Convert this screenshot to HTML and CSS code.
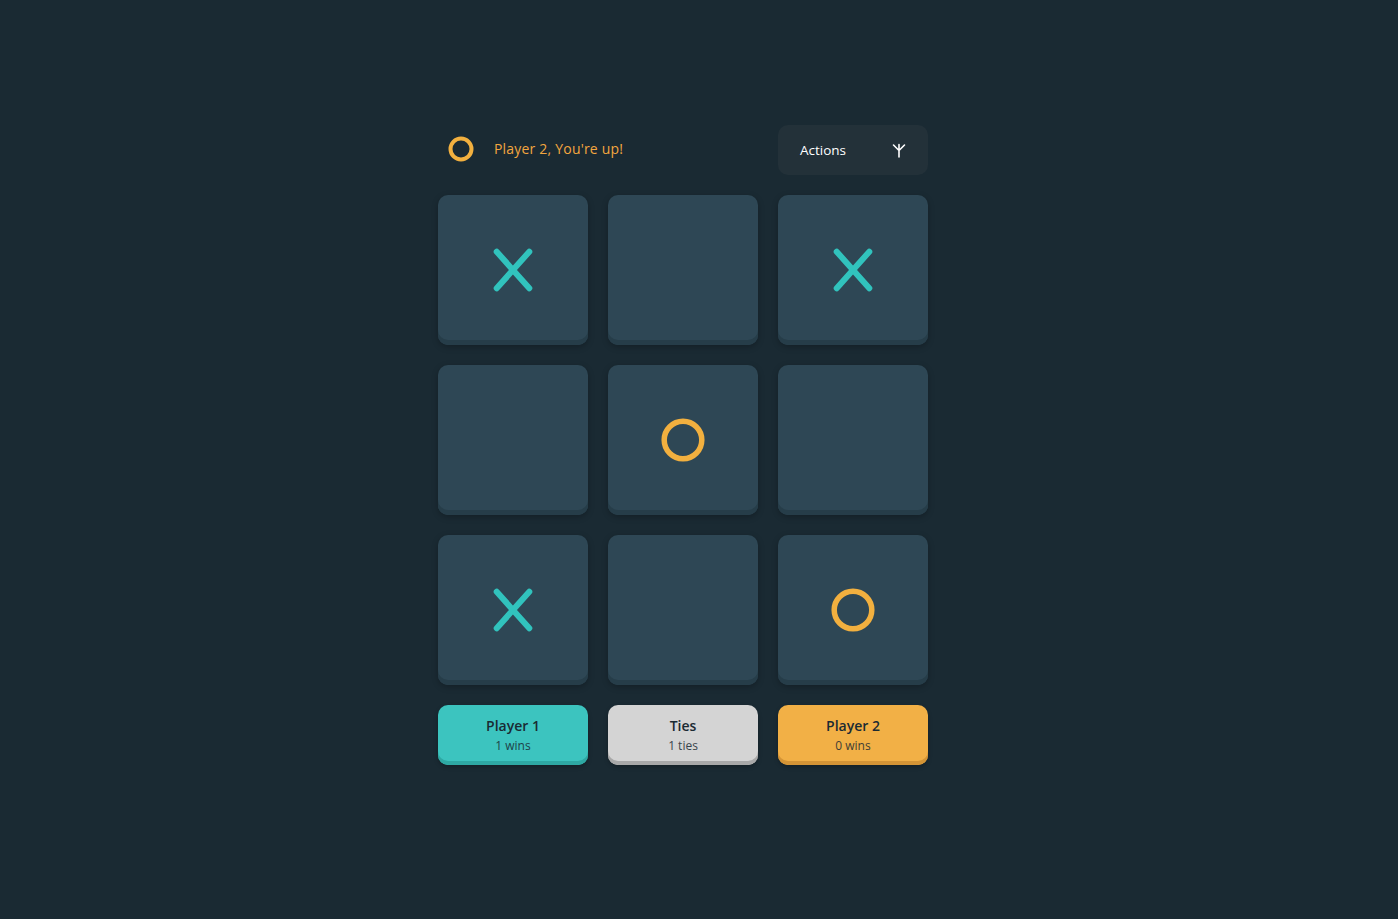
FILE: index.html
```html
<!DOCTYPE html>
<html lang="en">
<head>
<meta charset="utf-8">
<title>Tic Tac Toe</title>
<link rel="stylesheet" href="styles.css">
</head>
<body>
<main class="game">
  <header class="top">
    <div class="turn">
      <svg class="turn-icon" width="26" height="26" viewBox="0 0 26 26"><circle cx="13" cy="13" r="10.5" fill="none" stroke="#f2b03f" stroke-width="4"/></svg>
      <span class="turn-text">Player 2, You're up!</span>
    </div>
    <button class="actions">
      <span>Actions</span>
      <svg width="14" height="16" viewBox="0 0 14 16"><path d="M7 2.5V15M1.5 3L7 8.5L12.5 3" fill="none" stroke="#ffffff" stroke-width="1.6" stroke-linecap="round" stroke-linejoin="round"/></svg>
    </button>
  </header>
  <section class="board">
    <div class="cell"><svg class="mark" width="44" height="48" viewBox="0 0 44 48"><path d="M5.7 5.7L38.3 42.3M38.3 5.7L5.7 42.3" stroke="#31c3bd" stroke-width="6" stroke-linecap="round"/></svg></div>
    <div class="cell"></div>
    <div class="cell"><svg class="mark" width="44" height="48" viewBox="0 0 44 48"><path d="M5.7 5.7L38.3 42.3M38.3 5.7L5.7 42.3" stroke="#31c3bd" stroke-width="6" stroke-linecap="round"/></svg></div>
    <div class="cell"></div>
    <div class="cell"><svg class="mark" width="44" height="44" viewBox="0 0 44 44"><circle cx="22" cy="22" r="18.8" fill="none" stroke="#f2b03f" stroke-width="5.5"/></svg></div>
    <div class="cell"></div>
    <div class="cell"><svg class="mark" width="44" height="48" viewBox="0 0 44 48"><path d="M5.7 5.7L38.3 42.3M38.3 5.7L5.7 42.3" stroke="#31c3bd" stroke-width="6" stroke-linecap="round"/></svg></div>
    <div class="cell"></div>
    <div class="cell"><svg class="mark" width="44" height="44" viewBox="0 0 44 44"><circle cx="22" cy="22" r="18.8" fill="none" stroke="#f2b03f" stroke-width="5.5"/></svg></div>
  </section>
  <footer class="scores">
    <div class="score score-p1"><div class="score-title">Player 1</div><div class="score-sub">1 wins</div></div>
    <div class="score score-ties"><div class="score-title">Ties</div><div class="score-sub">1 ties</div></div>
    <div class="score score-p2"><div class="score-title">Player 2</div><div class="score-sub">0 wins</div></div>
  </footer>
</main>
</body>
</html>
```
FILE: styles.css
```css
* { box-sizing: border-box; }
html, body { margin: 0; padding: 0; }
body {
  background: #1a2a33;
  font-family: "Open Sans", "Noto Sans", sans-serif;
  min-height: 919px;
  padding-right: 32px;
}
.game {
  width: 490px;
  margin: 125px auto 0;
  display: flex;
  flex-direction: column;
  gap: 20px;
}
.top {
  display: flex;
  justify-content: space-between;
  align-items: center;
  height: 50px;
}
.turn {
  display: flex;
  align-items: center;
  gap: 20px;
  padding-left: 10px;
  margin-top: -3px;
}
.turn-icon { display: block; }
.turn-text {
  color: #f2a63f;
  font-size: 14px;
  letter-spacing: 0.2px;
}
.actions {
  width: 150px;
  height: 50px;
  border: 0;
  border-radius: 10px;
  background: #233139;
  color: #ffffff;
  font-family: inherit;
  font-size: 13.5px;
  display: flex;
  align-items: center;
  justify-content: space-between;
  padding: 0 22px 0 22px;
}
.actions svg { display: block; }
.board {
  display: grid;
  grid-template-columns: repeat(3, 150px);
  grid-auto-rows: 150px;
  gap: 20px;
}
.cell {
  background: #2e4755;
  border-radius: 10px;
  box-shadow: inset 0 -5px 0 #263d49, 0 2px 6px rgba(0, 0, 0, 0.25);
  display: flex;
  align-items: center;
  justify-content: center;
}
.mark { display: block; }
.scores {
  display: grid;
  grid-template-columns: repeat(3, 150px);
  gap: 20px;
}
.score {
  height: 60px;
  border-radius: 10px;
  display: flex;
  flex-direction: column;
  align-items: center;
  justify-content: center;
  color: #1a2a33;
}
.score-title {
  font-size: 14px;
  font-weight: 600;
  line-height: 19px;
}
.score-sub {
  font-size: 12px;
  line-height: 17px;
  margin-top: 2px;
  opacity: 0.85;
}
.score-p1 { background: #3cc4bf; box-shadow: inset 0 -4px 0 #2ea8a3, 0 2px 4px rgba(0,0,0,0.25); }
.score-ties { background: #d4d4d4; box-shadow: inset 0 -4px 0 #a8a8a8, 0 2px 4px rgba(0,0,0,0.25); }
.score-p2 { background: #f2b046; box-shadow: inset 0 -4px 0 #d49436, 0 2px 4px rgba(0,0,0,0.25); }
```
